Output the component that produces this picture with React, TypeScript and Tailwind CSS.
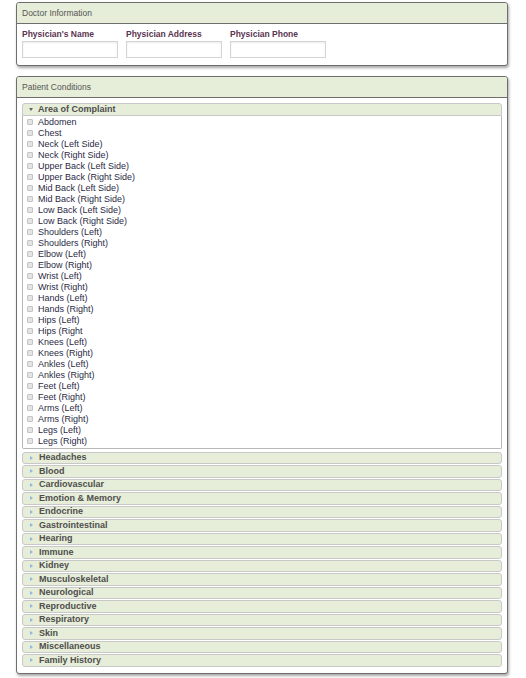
import React from 'react';

const complaints = [
  'Abdomen',
  'Chest',
  'Neck (Left Side)',
  'Neck (Right Side)',
  'Upper Back (Left Side)',
  'Upper Back (Right Side)',
  'Mid Back (Left Side)',
  'Mid Back (Right Side)',
  'Low Back (Left Side)',
  'Low Back (Right Side)',
  'Shoulders (Left)',
  'Shoulders (Right)',
  'Elbow (Left)',
  'Elbow (Right)',
  'Wrist (Left)',
  'Wrist (Right)',
  'Hands (Left)',
  'Hands (Right)',
  'Hips (Left)',
  'Hips (Right',
  'Knees (Left)',
  'Knees (Right)',
  'Ankles (Left)',
  'Ankles (Right)',
  'Feet (Left)',
  'Feet (Right)',
  'Arms (Left)',
  'Arms (Right)',
  'Legs (Left)',
  'Legs (Right)',
];

const sections = [
  'Headaches',
  'Blood',
  'Cardiovascular',
  'Emotion & Memory',
  'Endocrine',
  'Gastrointestinal',
  'Hearing',
  'Immune',
  'Kidney',
  'Musculoskeletal',
  'Neurological',
  'Reproductive',
  'Respiratory',
  'Skin',
  'Miscellaneous',
  'Family History',
];

const fields = ["Physician's Name", 'Physician Address', 'Physician Phone'];

function Panel({ title, children }: { title: string; children: React.ReactNode }) {
  return (
    <div className="ml-[16px] w-[492px] rounded-[3px] border border-[#6e6e6e] bg-white shadow-[1px_2px_3px_rgba(0,0,0,0.35)]">
      <div className="h-[21px] rounded-t-[3px] border-b border-[#6e6e6e] bg-[#e6edd8] pl-[5px] text-[8.5px] leading-[20px] text-[#555]">
        {title}
      </div>
      {children}
    </div>
  );
}

function SectionHeader({ label, open }: { label: string; open?: boolean }) {
  return (
    <div
      className={`flex h-[12.5px] items-center border border-[#c8c8c8] bg-[#e6edd8] pl-[6px] text-[9px] font-bold text-[#4e4e4e] ${
        open ? 'rounded-t-[3px]' : 'mt-[1px] rounded-[3px]'
      }`}
    >
      {open ? (
        <span className="mr-[5px] h-0 w-0 border-x-[2.5px] border-t-[3px] border-x-transparent border-t-[#666]" />
      ) : (
        <span className="mr-[6px] ml-[1px] h-0 w-0 border-y-[2.5px] border-l-[3px] border-y-transparent border-l-[#8fb8dc]" />
      )}
      <span className="leading-none">{label}</span>
    </div>
  );
}

export default function App() {
  return (
    <div className="min-h-[678px] bg-white pt-[2px] font-['Liberation_Sans',Arial,sans-serif]">
      <Panel title="Doctor Information">
        <div className="flex gap-[8px] px-[5px] pt-[5px] pb-[7px]">
          {fields.map((f) => (
            <div key={f} className="flex w-[96px] flex-col">
              <span className="text-[8.5px] font-bold leading-[11px] text-[#5a3550]">{f}</span>
              <input className="mt-[1px] h-[17px] w-[96px] border border-[#d4d4d4] bg-white shadow-[inset_0_1px_2px_rgba(0,0,0,0.08)] outline-none" />
            </div>
          ))}
        </div>
      </Panel>

      <div className="h-[10px]" />

      <Panel title="Patient Conditions">
        <div className="px-[5px] pt-[5px] pb-[6px]">
          <SectionHeader label="Area of Complaint" open />
          <div className="rounded-b-[2px] border-x border-b border-[#b8b8b8] pt-[1px] pb-[1px] pl-[4px]">
            {complaints.map((c) => (
              <div key={c} className="flex h-[11px] items-center text-[9px] text-[#2b2a45]">
                <span className="mr-[5px] h-[6px] w-[6px] rounded-[1px] border border-[#c4c4c4] bg-[#e4e4e4]" />
                <span className="leading-none">{c}</span>
              </div>
            ))}
          </div>
          <div className="h-[2px]" />
          {sections.map((s) => (
            <SectionHeader key={s} label={s} />
          ))}
        </div>
      </Panel>
    </div>
  );
}
